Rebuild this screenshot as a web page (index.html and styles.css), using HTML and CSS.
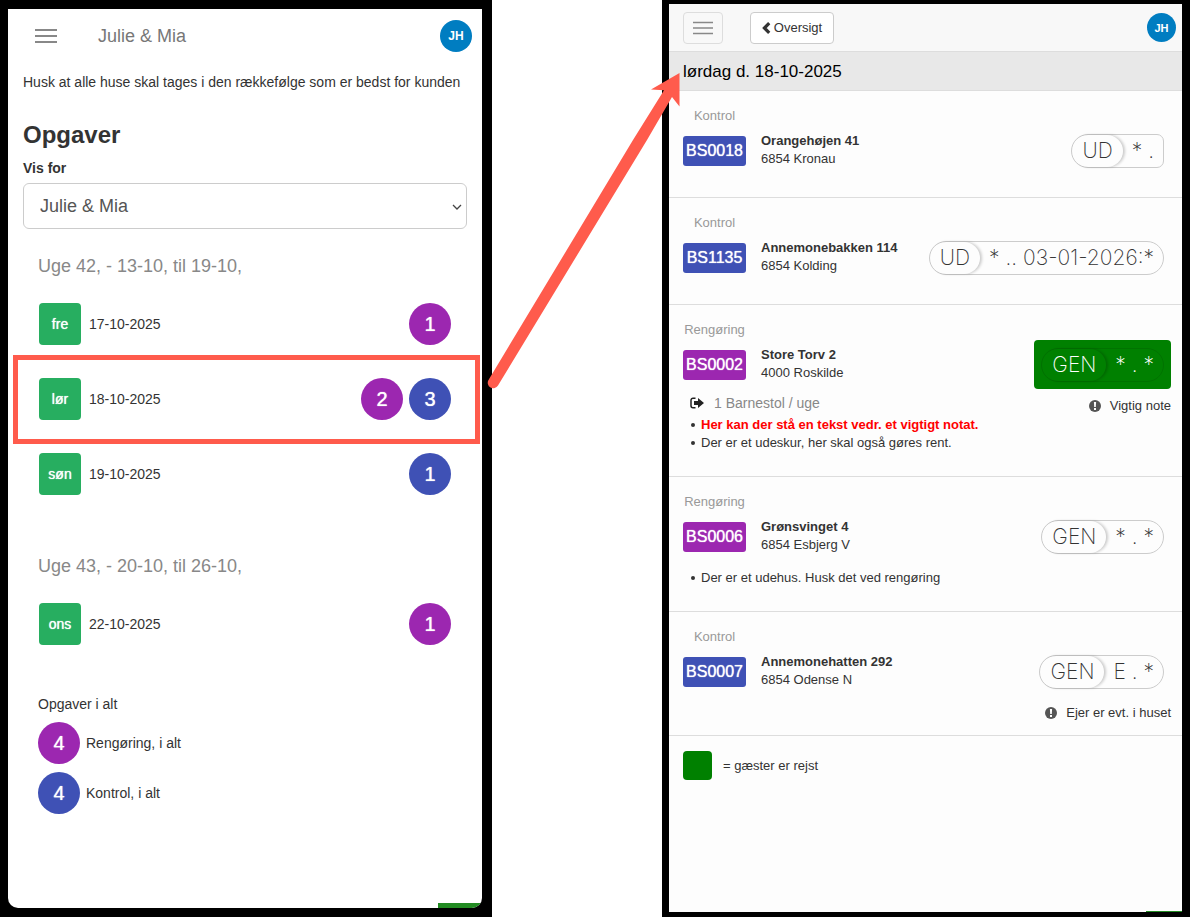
FILE: index.html
```html
<!DOCTYPE html>
<html lang="da">
<head>
<meta charset="utf-8">
<title>Opgaver</title>
<meta name="viewport" content="width=device-width, initial-scale=1">
<link rel="stylesheet" href="styles.css">
</head>
<body>
<div class="page">
  <section class="frame frame-left">
    <div class="screen screen-left">
      <header class="bar">
        <button class="menu" type="button" aria-label="Menu"><svg width="22" height="16" viewBox="0 0 22 16"><path d="M0 2h22M0 8h22M0 14h22" stroke="currentColor" stroke-width="2"/></svg></button>
        <span class="bar-title">Julie &amp; Mia</span>
        <span class="avatar">JH</span>
      </header>
      <div class="content">
        <p class="hint">Husk at alle huse skal tages i den rækkefølge som er bedst for kunden</p>
        <h1 class="title">Opgaver</h1>
        <label class="label" for="who">Vis for</label>
        <div class="select-wrap">
          <select class="select" id="who"><option>Julie &amp; Mia</option></select>
          <svg class="chevron" width="10" height="6" viewBox="0 0 10 6"><path d="M1 1l4 4 4-4" fill="none" stroke="#444" stroke-width="1.3"/></svg>
        </div>
      </div>
      <section class="week">
        <h2 class="week-title">Uge 42, - 13-10, til 19-10,</h2>
        <div class="day"><button class="day-name" type="button">fre</button><span class="date">17-10-2025</span><span class="count purple">1</span></div>
        <div class="day day-marked"><button class="day-name" type="button">lør</button><span class="date">18-10-2025</span><span class="count purple">2</span><span class="count blue">3</span></div>
        <div class="day"><button class="day-name" type="button">søn</button><span class="date">19-10-2025</span><span class="count blue">1</span></div>
      </section>
      <section class="week">
        <h2 class="week-title">Uge 43, - 20-10, til 26-10,</h2>
        <div class="day"><button class="day-name" type="button">ons</button><span class="date">22-10-2025</span><span class="count purple">1</span></div>
      </section>
      <section class="totals">
        <p>Opgaver i alt</p>
        <div class="total"><span class="count purple">4</span>Rengøring, i alt</div>
        <div class="total"><span class="count blue">4</span>Kontrol, i alt</div>
      </section>
      <div class="corner"></div>
    </div>
  </section>

  <section class="frame frame-right">
    <div class="screen screen-right">
      <header class="bar-right">
        <button class="menu menu-boxed" type="button" aria-label="Menu"><svg width="20" height="14" viewBox="0 0 20 14"><path d="M0 1.500h20M0 7h20M0 12.500h20" stroke="currentColor" stroke-width="1.500"/></svg></button>
        <a class="back" href="#"><svg width="9" height="12" viewBox="0 0 9 12"><path d="M7.200 1.200L2.400 6l4.800 4.800" fill="none" stroke="currentColor" stroke-width="3.200"/></svg>Oversigt</a>
        <span class="avatar avatar-small">JH</span>
      </header>
      <h2 class="day-header">lørdag d. 18-10-2025</h2>

      <article class="task">
        <div class="task-row">
          <div class="task-code"><span class="kind">Kontrol</span><a class="code blue" href="#">BS0018</a></div>
          <div class="address"><strong>Orangehøjen 41</strong><span>6854 Kronau</span></div>
          <div class="status"><div class="pill pill-square"><span class="pill-head">UD</span><span class="pill-body">* .</span></div></div>
        </div>
      </article>

      <article class="task">
        <div class="task-row">
          <div class="task-code"><span class="kind">Kontrol</span><a class="code blue" href="#">BS1135</a></div>
          <div class="address"><strong>Annemonebakken 114</strong><span>6854 Kolding</span></div>
          <div class="status"><div class="pill"><span class="pill-head">UD</span><span class="pill-body">* .. 03-01-2026:*</span></div></div>
        </div>
      </article>

      <article class="task">
        <div class="task-row">
          <div class="task-code"><span class="kind">Rengøring</span><a class="code purple" href="#">BS0002</a></div>
          <div class="address"><strong>Store Torv 2</strong><span>4000 Roskilde</span></div>
          <div class="status status-gone"><div class="pill pill-gone"><span class="pill-head">GEN</span><span class="pill-body">* . *</span></div></div>
        </div>
        <div class="task-extra">
          <div class="item"><svg width="14" height="12" viewBox="0 0 14 12"><path d="M5.500 1.200H3A2 2 0 0 0 1 3.200v5.600a2 2 0 0 0 2 2h2.500" fill="none" stroke="#222" stroke-width="1.500"/><path d="M4 4h4V1l6 5-6 5V8H4z" fill="#222"/></svg>1 Barnestol / uge</div>
          <div class="note"><svg width="12" height="12" viewBox="0 0 12 12"><circle cx="6" cy="6" r="6" fill="#555"/><path d="M4.900 2h2.200l-.3 5H5.200zM5 8h2v2H5z" fill="#fff"/></svg>Vigtig note</div>
        </div>
        <ul class="notes"><li class="important">Her kan der stå en tekst vedr. et vigtigt notat.</li><li>Der er et udeskur, her skal også gøres rent.</li></ul>
      </article>

      <article class="task">
        <div class="task-row">
          <div class="task-code"><span class="kind">Rengøring</span><a class="code purple" href="#">BS0006</a></div>
          <div class="address"><strong>Grønsvinget 4</strong><span>6854 Esbjerg V</span></div>
          <div class="status"><div class="pill"><span class="pill-head">GEN</span><span class="pill-body">* . *</span></div></div>
        </div>
        <ul class="notes notes-alone"><li>Der er et udehus. Husk det ved rengøring</li></ul>
      </article>

      <article class="task task-last">
        <div class="task-row">
          <div class="task-code"><span class="kind">Kontrol</span><a class="code blue" href="#">BS0007</a></div>
          <div class="address"><strong>Annemonehatten 292</strong><span>6854 Odense N</span></div>
          <div class="status"><div class="pill"><span class="pill-head">GEN</span><span class="pill-body">E . *</span></div></div>
        </div>
        <div class="task-extra task-extra-end">
          <div class="note"><svg width="12" height="12" viewBox="0 0 12 12"><circle cx="6" cy="6" r="6" fill="#555"/><path d="M4.900 2h2.200l-.3 5H5.200zM5 8h2v2H5z" fill="#fff"/></svg>Ejer er evt. i huset</div>
        </div>
      </article>
      <p class="legend"><span class="swatch"></span>= gæster er rejst</p>
      <div class="corner corner-thin"></div>
    </div>
  </section>
  <svg class="arrow" viewBox="0 0 1190 923" preserveAspectRatio="none" aria-hidden="true"><path d="M498 385.500L647 140 672 97l7.500 9.500 0-33.500-28.500 16.500 13 .8L633 140 488.500 380a5.400 5.400 0 0 0 9.500 5.500z" fill="#ff5b4c"/></svg>
</div>
</body>
</html>
```

FILE: styles.css
```css
* { box-sizing: border-box; }
body {
  margin: 0;
  background: #fff;
  color: #333;
  font-family: "Liberation Sans", Arial, sans-serif;
  font-size: 14px;
  line-height: 20px;
}
h1, h2, p, ul { margin: 0; }
button, select { font: inherit; }
.page {
  position: relative;
  display: grid;
  grid-template-columns: 492fr 528fr;
  column-gap: 170px;
  min-height: 100vh;
  padding-bottom: 6px;
}
.arrow { position: absolute; top: 0; left: 0; width: 100%; height: 100%; pointer-events: none; }
.frame { display: flex; background: #000; }
.frame-left { padding: 9px 10px 9px 8px; }
.frame-right { padding: 4px 8px 5px 7px; }
.screen { position: relative; flex: 1; background: #fff; overflow: hidden; }
.screen-left { border-radius: 0 0 10px 10px; }
.screen-right { background: #fdfdfd; font-size: 13px; }
.corner { position: absolute; right: 0; bottom: 0; width: 44px; height: 5px; background: #228b22; }
.corner-thin { width: 36px; height: 1px; }

.purple { background: #9c27b0; }
.blue { background: #3f51b5; }

.bar { display: flex; align-items: center; height: 53px; padding: 0 10px 0 27px; }
.menu { display: flex; padding: 0; border: 0; background: none; color: #888; }
.bar-title { margin-left: 41px; color: #777; font-size: 18px; }
.avatar {
  display: flex; align-items: center; justify-content: center;
  width: 32px; height: 32px; margin-left: auto;
  border-radius: 50%; background: #007dc1; color: #fff;
  font-size: 12px; font-weight: bold;
}
.content { padding: 10px 15px 0; }
.hint { white-space: nowrap; }
.title { margin-top: 28px; font-size: 24px; line-height: 30px; }
.label { display: block; margin: 8px 0 5px; font-weight: bold; }
.select-wrap { position: relative; }
.select {
  width: 100%; height: 46px; padding: 0 16px; appearance: none;
  border: 1px solid #ccc; border-radius: 6px; background: #fff; color: #555; font-size: 18px;
}
.chevron { position: absolute; right: 5px; top: 21px; }
.week { padding: 25px 31px 0; }
.week-title { color: #888; font-size: 18px; font-weight: normal; line-height: 24px; margin: 0 -1px 12px; }
.day { display: flex; align-items: center; gap: 6px; height: 67px; margin-bottom: 8px; }
.day-marked { height: 89px; margin: -10px -29px -4px -26px; padding: 0 24px 2px 21px; border: 5px solid #ff5b4c; }
.day-name {
  width: 42px; height: 42px; padding: 0;
  border: 0; border-radius: 4px; background: #27ae60; color: #fff;
  text-shadow: 0 0 1px currentColor;
}
.date { margin: 0 auto 0 2px; }
.count {
  display: flex; align-items: center; justify-content: center;
  width: 42px; height: 42px; border-radius: 50%;
  color: #fff; font-size: 20px; text-shadow: 0 0 1px currentColor;
}
.week + .week { padding-top: 39px; }
.totals { display: grid; gap: 8px; padding: 29px 30px; }
.total { display: flex; align-items: center; gap: 6px; }

.bar-right {
  display: flex; align-items: center; height: 48px; padding: 0 6px 0 14px;
  border-bottom: 1px solid #ddd; background: #f8f8f8;
}
.menu-boxed { align-items: center; justify-content: center; width: 40px; height: 32px; border: 1px solid #ddd; border-radius: 4px; }
.back {
  display: flex; align-items: center; justify-content: center; gap: 3px;
  width: 84px; height: 32px; margin-left: 27px;
  border: 1px solid #ccc; border-radius: 4px; background: #fff; color: #333; text-decoration: none;
}
.avatar-small { width: 29px; height: 29px; font-size: 11px; }
.day-header { height: 38px; padding: 0 14px; background: #e8e8e8; color: #000; font-size: 17px; font-weight: normal; line-height: 39px; }

.task { min-height: 107px; padding: 15px 11px 0 14px; border-top: 1px solid #ddd; }
.task-row { display: flex; align-items: flex-start; }
.task-code { display: flex; flex-direction: column; align-items: center; gap: 10px; width: 63px; }
.kind { color: #999; font-size: 13px; line-height: 20px; }
.code {
  width: 63px; border-radius: 3px; color: #fff; font-size: 16px; line-height: 30px;
  text-align: center; text-decoration: none; text-shadow: 0 0 1px currentColor;
}
.address { display: grid; margin: 26px auto 0 15px; line-height: 18px; }
.status { display: flex; align-items: center; height: 49px; margin-top: 20px; padding: 0 7px; border-radius: 4px; }
.status-gone { background: #008000; }
.pill {
  display: flex; height: 34px;
  border: 1px solid #ccc; border-radius: 17px;
  color: #333; font-family: Inter, sans-serif; font-size: 21px; font-weight: 200; line-height: 32px;
}
.pill-square { border-radius: 17px 7px 7px 17px; }
.pill-gone { border-color: #007300; color: #fff; }
.pill-head { padding: 0 10px; border-radius: 17px; box-shadow: 2px 0 3px rgba(0, 0, 0, .2); }
.pill-body { padding: 0 9px; white-space: pre; }
.task-extra { display: flex; align-items: center; justify-content: space-between; height: 27px; }
.task-extra-end { justify-content: flex-end; }
.item { display: flex; align-items: center; gap: 10px; padding-left: 7px; color: #888; font-size: 14px; }
.note { display: flex; align-items: center; gap: 9px; padding-top: 6px; }
.notes { padding-left: 18px; line-height: 18px; list-style: none; }
.notes li::before {
  content: ""; display: inline-block; width: 4px; height: 4px; margin: 0 6px 2px -10px;
  border-radius: 50%; background: #333;
}
.task:has(.notes) { padding-bottom: 24px; }
.notes-alone { padding-top: 8px; }
.important { color: #f00; font-weight: bold; }
.task-last { min-height: 125px; border-bottom: 1px solid #ddd; }
.legend { display: flex; align-items: center; gap: 11px; padding: 15px 14px; }
.swatch { width: 29px; height: 29px; border-radius: 4px; background: #008000; }
```
